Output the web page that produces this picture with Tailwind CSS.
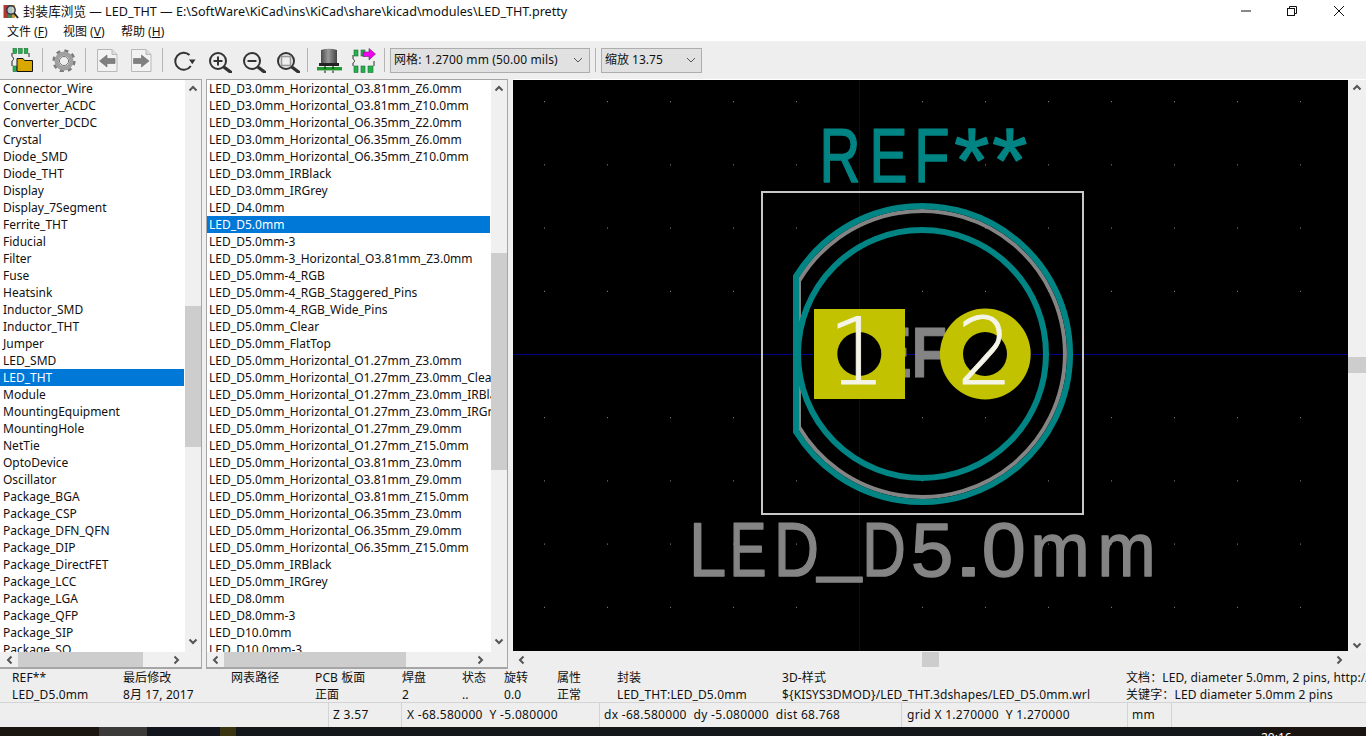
<!DOCTYPE html>
<html lang="zh">
<head>
<meta charset="utf-8">
<title>封装库浏览</title>
<script src="https://cdn.jsdelivr.net/npm/@tailwindcss/browser@4"></script>
</head>
<body class="w-[1366px] h-[736px] overflow-hidden bg-[#efefef] text-[12px] text-[#111] font-['Noto_Sans','Noto_Sans_CJK_SC',sans-serif]">
<div class="flex flex-col w-[1366px] h-[736px]">

  <!-- title bar -->
  <div class="flex items-center h-[22px] bg-white shrink-0 relative">
    <svg class="ml-[3px] w-[16px] h-[17px]" viewBox="0 0 16 17"><rect x="0.5" y="2" width="5" height="13" fill="#b03a30"/><rect x="5" y="2" width="4" height="13" fill="#3f7f5a"/><rect x="9" y="2" width="3" height="13" fill="#c8a040"/><circle cx="8" cy="7" r="4.2" fill="#cfe0ee" fill-opacity=".75" stroke="#334" stroke-width="1.4"/><path d="M11 10l4 5" stroke="#222" stroke-width="2"/></svg>
    <span class="ml-[4px] mt-[2px] whitespace-nowrap text-[#111] text-[12.6px]">封装库浏览 — LED_THT — E:\SoftWare\KiCad\ins\KiCad\share\kicad\modules\LED_THT.pretty</span>
    <div class="ml-auto flex items-center">
      <svg class="w-[12px] h-[12px] mr-[34px]" viewBox="0 0 12 12"><path d="M1 6h10" stroke="#111" stroke-width="1"/></svg>
      <svg class="w-[12px] h-[12px] mr-[35px]" viewBox="0 0 12 12" fill="none" stroke="#111"><rect x="1.5" y="3.5" width="7" height="7"/><path d="M3.5 3.5V1.5h7v7h-2"/></svg>
      <svg class="w-[12px] h-[12px] mr-[21px]" viewBox="0 0 12 12" fill="none" stroke="#111"><path d="M1 1l10 10M11 1L1 11"/></svg>
    </div>
  </div>

  <!-- menu -->
  <div class="flex items-center h-[19px] bg-white shrink-0 pl-[7px] pt-[1px]">
    <span class="w-[56px]">文件 (<u>F</u>)</span>
    <span class="w-[58px]">视图 (<u>V</u>)</span>
    <span>帮助 (<u>H</u>)</span>
  </div>

  <!-- toolbar -->
  <div class="flex items-center h-[38px] shrink-0 bg-[#eeeeee]">
    <svg class="ml-[9px] w-[24px] h-[26px]" viewBox="0 0 24 26">
      <g fill="#22b14c" stroke="#1c6b32" stroke-width=".6"><rect x="4" y="1.500" width="3.6" height="5"/><rect x="9.6" y="1.500" width="3.6" height="5"/><rect x="15.2" y="1.500" width="3.6" height="5"/><rect x="4" y="19" width="3.6" height="5.5"/></g>
      <path d="M3 6v3.500c2 1 2 3.500 0 4.500V19M20 6v4" stroke="#222" stroke-width="1" fill="none"/>
      <path d="M8 11.500h6l1.500 2H23.500v11H8z" fill="#d9a800" stroke="#111" stroke-width="1"/>
    </svg>
    <div class="ml-[9px] w-px h-[24px] bg-[#b4b4b4]"></div>
    <svg class="ml-[9px] w-[24px] h-[24px]" viewBox="0 0 24 24" fill="none">
      <circle cx="12" cy="13" r="9.600" stroke="#7a7a7a" stroke-width="4" stroke-dasharray="3.800 3.740"/>
      <circle cx="12" cy="13" r="7.400" stroke="#a0a0a0" stroke-width="4.200"/>
      <circle cx="12" cy="13" r="4.500" stroke="#6a6a6a" stroke-width="1"/>
      <circle cx="12" cy="13" r="3.800" fill="#eeeeee"/>
    </svg>
    <div class="ml-[9px] w-px h-[24px] bg-[#b4b4b4]"></div>
    <svg class="ml-[9px] w-[24px] h-[24px]" viewBox="0 0 24 24">
      <path d="M2.500 1.500H17l5 5V23.500H2.500z" fill="#f2f2f2" stroke="#b8b8b8"/><path d="M17 1.500v5h5" fill="#dcdcdc" stroke="#b8b8b8"/>
      <path d="M4.500 13L12 7v3.500h8v5h-8V19z" fill="#808080" stroke="#6a6a6a" stroke-width=".6"/>
    </svg>
    <svg class="ml-[10px] w-[24px] h-[24px]" viewBox="0 0 24 24">
      <path d="M2.500 1.500H17l5 5V23.500H2.500z" fill="#f2f2f2" stroke="#b8b8b8"/><path d="M17 1.500v5h5" fill="#dcdcdc" stroke="#b8b8b8"/>
      <path d="M20 13L12.500 7v3.500h-8v5h8V19z" fill="#808080" stroke="#6a6a6a" stroke-width=".6"/>
    </svg>
    <div class="ml-[9px] w-px h-[24px] bg-[#b4b4b4]"></div>
    <svg class="ml-[9px] w-[24px] h-[24px]" viewBox="0 0 24 24" fill="none">
      <path d="M18.800 18A8.500 8.500 0 1 1 17.500 7" stroke="#333" stroke-width="2"/>
      <path d="M17 11.500h6.500l-3.200 4.800z" fill="#333"/>
    </svg>
    <svg class="ml-[12px] w-[24px] h-[26px]" viewBox="0 0 24 26" fill="none">
      <circle cx="10" cy="14" r="8" stroke="#333" stroke-width="2"/><path d="M10 9.500v9M5.500 14h9" stroke="#333" stroke-width="2"/><path d="M16.500 20.500l6 4.500" stroke="#333" stroke-width="3.400" stroke-linecap="round"/>
    </svg>
    <svg class="ml-[10px] w-[24px] h-[26px]" viewBox="0 0 24 26" fill="none">
      <circle cx="10" cy="14" r="8" stroke="#333" stroke-width="2"/><path d="M5.500 14h9" stroke="#333" stroke-width="2"/><path d="M16.500 20.500l6 4.500" stroke="#333" stroke-width="3.400" stroke-linecap="round"/>
    </svg>
    <svg class="ml-[10px] w-[24px] h-[26px]" viewBox="0 0 24 26" fill="none">
      <circle cx="10" cy="14" r="8" stroke="#333" stroke-width="2"/><rect x="5.500" y="9.500" width="9" height="9" stroke="#999" stroke-width="1.600"/><path d="M16.500 20.500l6 4.500" stroke="#333" stroke-width="3.400" stroke-linecap="round"/>
    </svg>
    <div class="ml-[7px] w-px h-[24px] bg-[#b4b4b4]"></div>
    <svg class="ml-[9px] w-[26px] h-[26px]" viewBox="0 0 26 26">
      <defs><linearGradient id="cap" x1="0" x2="1" y1="0" y2="0"><stop offset="0" stop-color="#4a4a4a"/><stop offset=".45" stop-color="#9a9a9a"/><stop offset="1" stop-color="#444"/></linearGradient></defs>
      <path d="M4 3Q12 .5 20 3V16H4z" fill="url(#cap)"/><rect x="2" y="16" width="20" height="3" fill="#222"/>
      <rect x="0" y="20" width="25" height="3.400" fill="#1f9a2c"/><path d="M8 18v8M16 18v8" stroke="#111" stroke-width="1" stroke-dasharray="4 1.500"/>
    </svg>
    <svg class="ml-[8px] w-[26px] h-[26px]" viewBox="0 0 26 26">
      <path d="M2 8v4c2 1 2 3 0 4v3M23 14v5" fill="none" stroke="#333" stroke-width="1"/>
      <g fill="#22b14c" stroke="#1c6b32" stroke-width=".6"><rect x="3" y="3" width="4" height="6"/><rect x="10" y="3" width="4" height="6"/><rect x="3" y="19" width="4" height="6.500"/><rect x="10" y="19" width="4" height="6.500"/><rect x="17" y="19" width="5" height="6.500"/></g>
      <path d="M12 5h6V1.500L24.500 7 18 13V9.500h-6z" fill="#f000f0" stroke="#702070" stroke-width=".6"/>
    </svg>
    <div class="ml-[7px] w-px h-[24px] bg-[#b4b4b4]"></div>
    <div class="ml-[5px] w-[200px] h-[25px] border border-[#adadad] bg-[#e1e1e1] flex items-center pl-[3px] pr-[6px]">
      <span class="whitespace-nowrap tracking-[0.12px]">网格: 1.2700 mm (50.00 mils)</span>
      <svg class="ml-auto w-[10px] h-[6px]" viewBox="0 0 10 6" fill="none"><path d="M1 1l4 4 4-4" stroke="#555" stroke-width="1"/></svg>
    </div>
    <div class="ml-[5px] w-px h-[24px] bg-[#b4b4b4]"></div>
    <div class="ml-[5px] w-[101px] h-[25px] border border-[#adadad] bg-[#e1e1e1] flex items-center pl-[3px] pr-[5px]">
      <span class="whitespace-nowrap">缩放 13.75</span>
      <svg class="ml-auto w-[10px] h-[6px]" viewBox="0 0 10 6" fill="none"><path d="M1 1l4 4 4-4" stroke="#555" stroke-width="1"/></svg>
    </div>
  </div>

  <!-- main -->
  <div class="flex h-[590px] shrink-0">

    <!-- library list -->
    <div class="w-[202px] flex flex-col border-t border-b-2 border-r border-[#a6a6a6] overflow-hidden">
      <div class="flex h-[572px] shrink-0">
        <div class="w-[185px] bg-white overflow-hidden [&>div]:h-[17px] [&>div]:leading-[17px] [&>div]:pl-[3px] [&>div]:whitespace-nowrap">
          <div>Connector_Wire</div><div>Converter_ACDC</div><div>Converter_DCDC</div><div>Crystal</div><div>Diode_SMD</div><div>Diode_THT</div><div>Display</div><div>Display_7Segment</div><div>Ferrite_THT</div><div>Fiducial</div><div>Filter</div><div>Fuse</div><div>Heatsink</div><div>Inductor_SMD</div><div>Inductor_THT</div><div>Jumper</div><div>LED_SMD</div><div class="w-[184px] bg-[#0078d7] text-white">LED_THT</div><div>Module</div><div>MountingEquipment</div><div>MountingHole</div><div>NetTie</div><div>OptoDevice</div><div>Oscillator</div><div>Package_BGA</div><div>Package_CSP</div><div>Package_DFN_QFN</div><div>Package_DIP</div><div>Package_DirectFET</div><div>Package_LCC</div><div>Package_LGA</div><div>Package_QFP</div><div>Package_SIP</div><div>Package_SO</div>
        </div>
        <div class="w-[16px] bg-[#f0f0f0] flex flex-col items-center">
          <svg class="mt-[5px] w-[10px] h-[7px]" viewBox="0 0 10 7" fill="none"><path d="M1.500 5.500L5 2l3.500 3.500" stroke="#555" stroke-width="2"/></svg>
          <div class="mt-[214px] w-full h-[141px] bg-[#cdcdcd]"></div>
          <svg class="mt-[191px] w-[10px] h-[7px]" viewBox="0 0 10 7" fill="none"><path d="M1.500 1.500L5 5l3.500-3.500" stroke="#555" stroke-width="2"/></svg>
        </div>
      </div>
      <div class="flex items-center h-[15px] bg-[#f0f0f0]">
        <svg class="ml-[6px] w-[7px] h-[10px]" viewBox="0 0 7 10" fill="none"><path d="M5.500 1.500L2 5l3.500 3.500" stroke="#555" stroke-width="2"/></svg>
        <div class="ml-[5px] w-[125px] h-full bg-[#cdcdcd]"></div>
        <svg class="ml-[30px] w-[7px] h-[10px]" viewBox="0 0 7 10" fill="none"><path d="M1.500 1.500L5 5 1.500 8.500" stroke="#555" stroke-width="2"/></svg>
      </div>
    </div>

    <!-- footprint list -->
    <div class="ml-[4px] w-[302px] flex flex-col border-t border-b-2 border-x border-[#a6a6a6] overflow-hidden">
      <div class="flex h-[572px] shrink-0">
        <div class="w-[284px] bg-white overflow-hidden tracking-[0.03px] [&>div]:h-[17px] [&>div]:leading-[17px] [&>div]:pl-[2px] [&>div]:whitespace-nowrap">
          <div>LED_D3.0mm_Horizontal_O3.81mm_Z6.0mm</div><div>LED_D3.0mm_Horizontal_O3.81mm_Z10.0mm</div><div>LED_D3.0mm_Horizontal_O6.35mm_Z2.0mm</div><div>LED_D3.0mm_Horizontal_O6.35mm_Z6.0mm</div><div>LED_D3.0mm_Horizontal_O6.35mm_Z10.0mm</div><div>LED_D3.0mm_IRBlack</div><div>LED_D3.0mm_IRGrey</div><div>LED_D4.0mm</div><div class="w-[283px] bg-[#0078d7] text-white">LED_D5.0mm</div><div>LED_D5.0mm-3</div><div>LED_D5.0mm-3_Horizontal_O3.81mm_Z3.0mm</div><div>LED_D5.0mm-4_RGB</div><div>LED_D5.0mm-4_RGB_Staggered_Pins</div><div>LED_D5.0mm-4_RGB_Wide_Pins</div><div>LED_D5.0mm_Clear</div><div>LED_D5.0mm_FlatTop</div><div>LED_D5.0mm_Horizontal_O1.27mm_Z3.0mm</div><div>LED_D5.0mm_Horizontal_O1.27mm_Z3.0mm_Clear</div><div>LED_D5.0mm_Horizontal_O1.27mm_Z3.0mm_IRBlack</div><div>LED_D5.0mm_Horizontal_O1.27mm_Z3.0mm_IRGrey</div><div>LED_D5.0mm_Horizontal_O1.27mm_Z9.0mm</div><div>LED_D5.0mm_Horizontal_O1.27mm_Z15.0mm</div><div>LED_D5.0mm_Horizontal_O3.81mm_Z3.0mm</div><div>LED_D5.0mm_Horizontal_O3.81mm_Z9.0mm</div><div>LED_D5.0mm_Horizontal_O3.81mm_Z15.0mm</div><div>LED_D5.0mm_Horizontal_O6.35mm_Z3.0mm</div><div>LED_D5.0mm_Horizontal_O6.35mm_Z9.0mm</div><div>LED_D5.0mm_Horizontal_O6.35mm_Z15.0mm</div><div>LED_D5.0mm_IRBlack</div><div>LED_D5.0mm_IRGrey</div><div>LED_D8.0mm</div><div>LED_D8.0mm-3</div><div>LED_D10.0mm</div><div>LED_D10.0mm-3</div>
        </div>
        <div class="w-[16px] bg-[#f0f0f0] flex flex-col items-center">
          <svg class="mt-[5px] w-[10px] h-[7px]" viewBox="0 0 10 7" fill="none"><path d="M1.500 5.500L5 2l3.500 3.500" stroke="#555" stroke-width="2"/></svg>
          <div class="mt-[161px] w-full h-[217px] bg-[#cdcdcd]"></div>
          <svg class="mt-[168px] w-[10px] h-[7px]" viewBox="0 0 10 7" fill="none"><path d="M1.500 1.500L5 5l3.500-3.500" stroke="#555" stroke-width="2"/></svg>
        </div>
      </div>
      <div class="flex items-center h-[15px] bg-[#f0f0f0]">
        <svg class="ml-[5px] w-[7px] h-[10px]" viewBox="0 0 7 10" fill="none"><path d="M5.500 1.500L2 5l3.500 3.500" stroke="#555" stroke-width="2"/></svg>
        <div class="ml-[5px] w-[182px] h-full bg-[#cdcdcd]"></div>
        <svg class="ml-[71px] w-[7px] h-[10px]" viewBox="0 0 7 10" fill="none"><path d="M1.500 1.500L5 5 1.500 8.500" stroke="#555" stroke-width="2"/></svg>
      </div>
    </div>

    <!-- canvas + scrollbars -->
    <div class="ml-[5px] flex-1 flex flex-col border-t border-white">
      <div class="flex h-[571px] shrink-0">
        <svg class="w-[835px] h-[571px] bg-black shrink-0" viewBox="513 80 835 571">
          <defs>
            <pattern id="grid" patternUnits="userSpaceOnUse" x="544" y="38" width="63" height="63.2"><rect x="0" y="0" width="1" height="1" fill="#8c8c8c"/></pattern>
          </defs>
          <rect x="513" y="80" width="835" height="571" fill="url(#grid)"/>
          <path d="M513 354.500H1348" stroke="#000084" stroke-width="1"/>
          <path d="M859.500 80V651" stroke="#000084" stroke-width="1"/>
          <g font-family="'Liberation Sans',sans-serif" font-size="76" stroke-width="1.500" stroke-linejoin="round" lengthAdjust="spacingAndGlyphs">
            <text y="182" fill="#008484" stroke="#008484"><tspan x="819.500" textLength="41" lengthAdjust="spacingAndGlyphs">R</tspan><tspan x="869.500" textLength="38" lengthAdjust="spacingAndGlyphs">E</tspan><tspan x="914.300" textLength="35.300" lengthAdjust="spacingAndGlyphs">F</tspan><tspan x="954.300" y="192" font-size="90">*</tspan><tspan x="992.300" y="192" font-size="90">*</tspan></text>
            <text y="576" fill="#848484" stroke="#848484"><tspan x="689.100" textLength="37.200" lengthAdjust="spacingAndGlyphs">L</tspan><tspan x="729.600" textLength="37" lengthAdjust="spacingAndGlyphs">E</tspan><tspan x="774" textLength="45" lengthAdjust="spacingAndGlyphs">D</tspan><tspan x="817.800" y="567" textLength="43.500" lengthAdjust="spacingAndGlyphs">_</tspan><tspan x="862.200" y="576" textLength="43.600" lengthAdjust="spacingAndGlyphs">D</tspan><tspan x="911" textLength="42.300" lengthAdjust="spacingAndGlyphs">5</tspan><tspan x="953" textLength="31" lengthAdjust="spacingAndGlyphs">.</tspan><tspan x="981.700" textLength="44" lengthAdjust="spacingAndGlyphs">0</tspan><tspan x="1030.300" textLength="59.500" lengthAdjust="spacingAndGlyphs">m</tspan><tspan x="1097.400" textLength="58.200" lengthAdjust="spacingAndGlyphs">m</tspan></text>
            <text y="377" font-size="70" font-weight="700" fill="#848484" stroke="#848484" stroke-width="1"><tspan x="865.600">E</tspan><tspan x="911.500" textLength="35.500" lengthAdjust="spacingAndGlyphs">F</tspan></text>
          </g>
          <rect x="762" y="192" width="321" height="322" fill="none" stroke="#c8c8c8" stroke-width="2"/>
          <path d="M799 281A143 143 0 1 1 799 427Z" fill="none" stroke="#848484" stroke-width="4"/>
          <path d="M796 276.400A148 148 0 1 1 796 431.600Z" fill="none" stroke="#008484" stroke-width="6"/>
          <circle cx="922" cy="354" r="124" fill="none" stroke="#008484" stroke-width="6"/>
          <rect x="814" y="309" width="91" height="90" fill="#c2c200"/>
          <circle cx="985.300" cy="354" r="45.400" fill="#c2c200"/>
          <circle cx="859.300" cy="354" r="22" fill="#000"/>
          <circle cx="985" cy="354" r="22" fill="#000"/>
          <g font-family="'DejaVu Sans',sans-serif" font-weight="200" font-size="92" fill="#f4f4e8" stroke="#f4f4e8" stroke-width=".8" stroke-linejoin="round">
            <text x="828" y="384" textLength="58" lengthAdjust="spacingAndGlyphs">1</text>
            <text x="957" y="384" textLength="56" lengthAdjust="spacingAndGlyphs">2</text>
          </g>
        </svg>
        <div class="flex-1 bg-[#f0f0f0] flex flex-col items-center">
          <svg class="mt-[4px] w-[10px] h-[7px]" viewBox="0 0 10 7" fill="none"><path d="M1.500 5.500L5 2l3.500 3.500" stroke="#555" stroke-width="2"/></svg>
          <div class="mt-[266px] w-full h-[16px] bg-[#cdcdcd]"></div>
          <svg class="mt-[269px] w-[10px] h-[7px]" viewBox="0 0 10 7" fill="none"><path d="M1.500 1.500L5 5l3.500-3.500" stroke="#555" stroke-width="2"/></svg>
        </div>
      </div>
      <div class="flex items-center h-[17px] bg-[#eeeeee]">
        <svg class="ml-[5px] w-[7px] h-[10px]" viewBox="0 0 7 10" fill="none"><path d="M5.500 1.500L2 5l3.500 3.500" stroke="#555" stroke-width="2"/></svg>
        <div class="ml-[397px] w-[17px] h-[15px] bg-[#cdcdcd]"></div>
        <svg class="ml-[397px] w-[7px] h-[10px]" viewBox="0 0 7 10" fill="none"><path d="M1.500 1.500L5 5 1.500 8.500" stroke="#555" stroke-width="2"/></svg>
      </div>
    </div>
  </div>

  <!-- message panel -->
  <div class="flex h-[34px] shrink-0 border-b border-[#d4d4d4] bg-[#eeeeee] leading-[17px] whitespace-nowrap overflow-hidden tracking-[0.12px]">
    <div class="ml-[12px] w-[111px]"><div>REF**</div><div>LED_D5.0mm</div></div>
    <div class="w-[108px]"><div>最后修改</div><div>8月 17, 2017</div></div>
    <div class="w-[84px]"><div>网表路径</div></div>
    <div class="w-[87px]"><div>PCB 板面</div><div>正面</div></div>
    <div class="w-[60px]"><div>焊盘</div><div>2</div></div>
    <div class="w-[42px]"><div>状态</div><div>..</div></div>
    <div class="w-[53px]"><div>旋转</div><div>0.0</div></div>
    <div class="w-[60px]"><div>属性</div><div>正常</div></div>
    <div class="w-[165px]"><div>封装</div><div>LED_THT:LED_D5.0mm</div></div>
    <div class="w-[344px]"><div>3D-样式</div><div>${KISYS3DMOD}/LED_THT.3dshapes/LED_D5.0mm.wrl</div></div>
    <div class="w-[240px]"><div>文档：LED, diameter 5.0mm, 2 pins, http://www.kingbright.com</div><div>关键字：LED diameter 5.0mm 2 pins</div></div>
  </div>

  <!-- status bar -->
  <div class="flex h-[24px] shrink-0 bg-[#eeeeee] items-stretch whitespace-nowrap tracking-[0.3px]">
    <div class="w-[329px] border-r border-[#d4d4d4]"></div>
    <div class="w-[73px] pl-[4px] border-r border-[#d4d4d4] leading-[24px]">Z 3.57</div>
    <div class="w-[198px] pl-[5px] border-r border-[#d4d4d4] leading-[24px]">X -68.580000&nbsp; Y -5.080000</div>
    <div class="w-[302px] pl-[4px] border-r border-[#d4d4d4] leading-[24px]">dx -68.580000&nbsp; dy -5.080000&nbsp; dist 68.768</div>
    <div class="w-[226px] pl-[5px] border-r border-[#d4d4d4] leading-[24px]">grid X 1.270000&nbsp; Y 1.270000</div>
    <div class="w-[44px] pl-[4px] border-r border-[#d4d4d4] leading-[24px]">mm</div>
  </div>

  <!-- desktop strip behind the window -->
  <div class="flex flex-1 overflow-hidden bg-[#10141a]">
    <div class="w-[99px] bg-[#1c1610]"></div>
    <div class="w-[48px] bg-[#3c3a38]"></div>
    <div class="w-[73px] bg-[#12161c]"></div>
    <div class="w-[16px] bg-[#3a3410]"></div>
    <div class="w-[1025px] bg-[#14171a]"></div>
    <div class="flex-1 bg-[#1a1410] text-white pt-[5px] leading-[12px]">20:16</div>
  </div>
</div>
</body>
</html>
